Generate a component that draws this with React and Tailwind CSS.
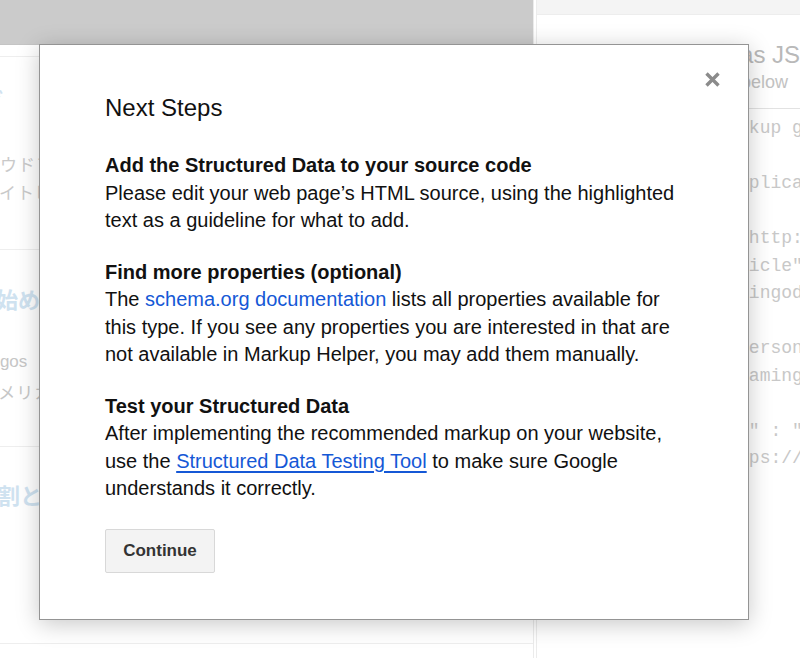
import { useState } from "react";

// faded page behind the dialog (it sits under a white overlay in the original)
function LeftColumn() {
  return (
    <div className="w-[534px] shrink-0 h-full overflow-hidden border-r border-[#ebebeb]">
      <div className="h-[45px] bg-[#cbcbcb] border-b border-[#c4c4c4]" />
      <div className="h-[11px]" />
      <div className="h-[194px] overflow-hidden border-t border-b border-[#eeeeee] pt-[28px]">
        <div className="h-[28px] leading-[28px] text-[22px] font-bold text-[#cfe2f0] whitespace-nowrap -ml-[63px] font-['Noto_Sans_CJK_JP',sans-serif]">
          ブログ
        </div>
        <div className="h-[37px]" />
        <div className="h-[28px] leading-[28px] text-[17px] text-[#c9c9c9] whitespace-nowrap -ml-[36px] tracking-[1px] font-['Noto_Sans_CJK_JP',sans-serif]">
          クラウドファンディング
        </div>
        <div className="h-[28px] leading-[28px] text-[17px] text-[#c9c9c9] whitespace-nowrap -ml-[19px] tracking-[1px] font-['Noto_Sans_CJK_JP',sans-serif]">
          サイトビルダー
        </div>
      </div>
      <div className="h-[197px] overflow-hidden border-b border-[#eeeeee] pt-[34px]">
        <div className="h-[28px] leading-[28px] text-[22px] font-bold text-[#cfe2f0] whitespace-nowrap -ml-[92px] font-['Noto_Sans_CJK_JP',sans-serif]">
          ブログを始めよう
        </div>
        <div className="h-[35px]" />
        <div className="h-[30px] leading-[30px] text-[17px] text-[#c6c6c6] whitespace-nowrap -ml-[19px]">
          Logos
        </div>
        <div className="h-[30px] leading-[30px] text-[17px] text-[#c6c6c6] whitespace-nowrap -ml-[19px] tracking-[1px] font-['Noto_Sans_CJK_JP',sans-serif]">
          アメリカ
        </div>
      </div>
      <div className="h-[197px] overflow-hidden border-b border-[#eeeeee] pt-[33px]">
        <div className="h-[28px] leading-[28px] text-[22px] font-bold text-[#cfe2f0] whitespace-nowrap -ml-[24px] font-['Noto_Sans_CJK_JP',sans-serif]">
          役割とは
        </div>
      </div>
    </div>
  );
}

const codeLines = [
  "<!-- JSON-LD markup generated by Google -->",
  "",
  '<script type="application/ld+json">',
  "",
  '  "@context" : "http://schema.org",',
  '  "@type" : "Article",',
  '  "name" : "Flamingodance",',
  "",
  '    "@type" : "Person",',
  '    "name" : "Flaming",',
  "",
  '  "datePublished" : "2019-01-01",',
  '  "image" : "https://example.com",',
];

function RightColumn() {
  return (
    <div className="flex-1 min-w-0 ml-[2px] h-full border-l border-[#ececec] overflow-hidden">
      <div className="h-[15px] bg-[#f4f4f4] border-b border-[#ededed]" />
      <div className="ml-[39px] border-b border-[#e2e2e2] pb-[14px]">
        <div className="mt-[25px] pl-[44px] text-[24px] leading-[30px] text-[#b9b9b9] whitespace-nowrap">
          Generated as JSON-LD
        </div>
        <div className="pl-[44px] text-[18px] leading-[24px] text-[#c2c2c2] whitespace-nowrap">
          Copy the code below
        </div>
      </div>
      <pre className="ml-[39px] mt-[6px] font-['Liberation_Mono',monospace] text-[18px] leading-[27.5px] text-[#c8c8c8] whitespace-pre">
        {codeLines.map((line, i) => (
          <div key={i} className="h-[27.5px]">{line}</div>
        ))}
      </pre>
    </div>
  );
}

function NextStepsDialog() {
  const [open, setOpen] = useState(true);
  if (!open) return null;

  return (
    <div className="absolute left-[39px] top-[44px] w-[710px] h-[576px] bg-white border border-[#949494] shadow-[0_4px_22px_rgba(0,0,0,0.22)] text-[#111]">
      <button
        type="button"
        onClick={() => setOpen(false)}
        className="absolute top-[26px] right-[27px] w-[17px] h-[17px]"
        aria-label="Close"
      >
        <svg viewBox="0 0 17 17" className="w-[17px] h-[17px]">
          <path d="M2.5 2.5 L14.5 14.5 M14.5 2.5 L2.5 14.5" stroke="#8b8b8b" strokeWidth="3.4" />
        </svg>
      </button>

      <div className="pl-[65px] pt-[49px]">
        <h2 className="text-[24px] leading-[28px]">Next Steps</h2>

        <div className="mt-[30px] w-[586px] text-[20px] leading-[27.5px]">
          <div className="mb-[24px]">
            <div className="font-bold">Add the Structured Data to your source code</div>
            <div>
              Please edit your web page’s HTML source, using the highlighted text as a guideline for what to add.
            </div>
          </div>

          <div className="mb-[24px]">
            <div className="font-bold">Find more properties (optional)</div>
            <div>
              The <a className="text-[#1558d6]">schema.org documentation</a> lists all properties available for
              this type. If you see any properties you are interested in that are not available in Markup Helper,
              you may add them manually.
            </div>
          </div>

          <div>
            <div className="font-bold">Test your Structured Data</div>
            <div>
              After implementing the recommended markup on your website, use the{" "}
              <a className="text-[#1558d6] underline underline-offset-[3px]">Structured Data Testing Tool</a> to
              make sure Google understands it correctly.
            </div>
          </div>
        </div>

        <button
          type="button"
          onClick={() => setOpen(false)}
          className="mt-[26px] w-[110px] h-[44px] bg-[#f3f3f3] border border-[#d8d8d8] rounded-[2px] text-[17px] font-bold text-[#333]"
        >
          Continue
        </button>
      </div>
    </div>
  );
}

export default function App() {
  return (
    <div className="relative w-[800px] h-[658px] overflow-hidden bg-white font-['Liberation_Sans',Arial,sans-serif]">
      <div className="flex h-full">
        <LeftColumn />
        <RightColumn />
      </div>
      <NextStepsDialog />
    </div>
  );
}
